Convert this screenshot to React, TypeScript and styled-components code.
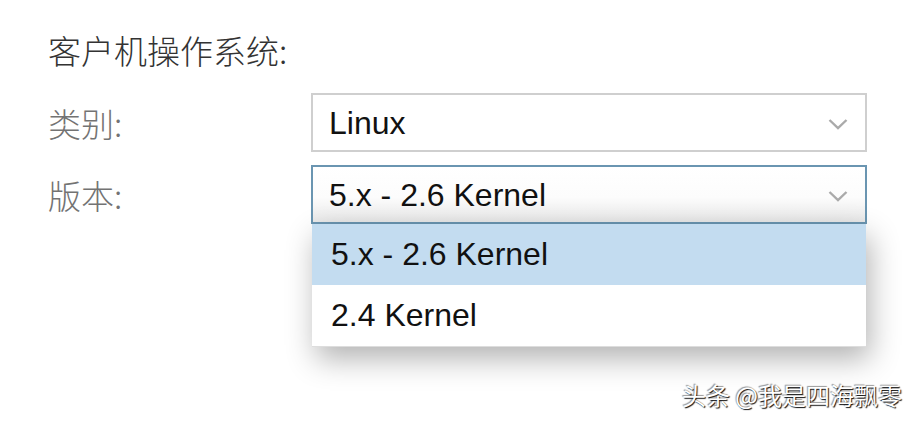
import styled, { createGlobalStyle } from 'styled-components';

const GlobalStyle = createGlobalStyle`
  html, body {
    margin: 0;
    padding: 0;
    background: #ffffff;
  }

  body {
    width: 915px;
    height: 422px;
    overflow: hidden;
    font-family: 'Liberation Sans', Arial, 'Noto Sans CJK SC', sans-serif;
  }
`;

const options = ['5.x - 2.6 Kernel', '2.4 Kernel'];

const Chevron = () => (
  <svg width="20" height="12" viewBox="0 0 20 12">
    <polyline
      points="1.5,2 10,10 18.5,2"
      fill="none"
      stroke="#aaaaaa"
      strokeWidth="2.4"
    />
  </svg>
);

const App = () => {
  return (
    <>
      <GlobalStyle />
      <Page>
        <Title>客户机操作系统:</Title>
        <Form>
          <Label>类别:</Label>
          <Select>
            <span>Linux</span>
            <Chevron />
          </Select>
          <Label>版本:</Label>
          <SelectWrap>
            <Select $open>
              <span>{options[0]}</span>
              <Chevron />
            </Select>
            <Menu>
              {options.map((opt, i) => (
                <Option key={opt} $active={i === 0}>
                  {opt}
                </Option>
              ))}
            </Menu>
          </SelectWrap>
        </Form>
        <Watermark>头条 @我是四海飘零</Watermark>
      </Page>
    </>
  );
};

export default App;

const Page = styled.div`
  position: relative;
  width: 915px;
  height: 422px;
  box-sizing: border-box;
  padding: 30px 0 0 48px;
`;

const Title = styled.div`
  font-family: 'Noto Sans CJK SC', sans-serif;
  font-weight: 300;
  font-size: 33px;
  line-height: 40px;
  color: #333333;
  margin-bottom: 23px;
`;

const Form = styled.div`
  display: grid;
  grid-template-columns: 263px 556px;
  grid-auto-rows: 59px;
  row-gap: 13px;
  align-items: center;
`;

const Label = styled.div`
  font-family: 'Noto Sans CJK SC', sans-serif;
  font-weight: 300;
  font-size: 33px;
  line-height: 40px;
  color: #737373;
`;

const SelectWrap = styled.div`
  position: relative;
  height: 59px;
`;

const Select = styled.div<{ $open?: boolean }>`
  box-sizing: border-box;
  height: 59px;
  display: flex;
  align-items: center;
  justify-content: space-between;
  padding: 2px 17px 0 16px;
  border: 2px solid ${(p) => (p.$open ? '#6a95b1' : '#cfcfcf')};
  background: ${(p) =>
    p.$open ? 'linear-gradient(#ffffff 0%, #fcfcfc 55%, #e9e9e9 100%)' : '#ffffff'};
  font-size: 32px;
  color: #111111;
`;

const Menu = styled.div`
  position: absolute;
  top: 59px;
  left: 1px;
  right: 1px;
  background: #ffffff;
  box-shadow: 4px 12px 28px rgba(0, 0, 0, 0.3);
  border-bottom: 1px solid #dddddd;
`;

const Option = styled.div<{ $active?: boolean }>`
  height: 61px;
  display: flex;
  align-items: center;
  padding-left: 19px;
  font-size: 32px;
  color: #111111;
  background: ${(p) => (p.$active ? '#c3dcf0' : '#ffffff')};
`;

const Watermark = styled.div`
  position: absolute;
  right: 13px;
  bottom: 10px;
  font-family: 'Noto Sans CJK SC', sans-serif;
  font-size: 24px;
  color: #ffffff;
  text-shadow: 1px 1px 1px rgba(0, 0, 0, 0.95), -1px -1px 1px rgba(0, 0, 0, 0.4);
`;
